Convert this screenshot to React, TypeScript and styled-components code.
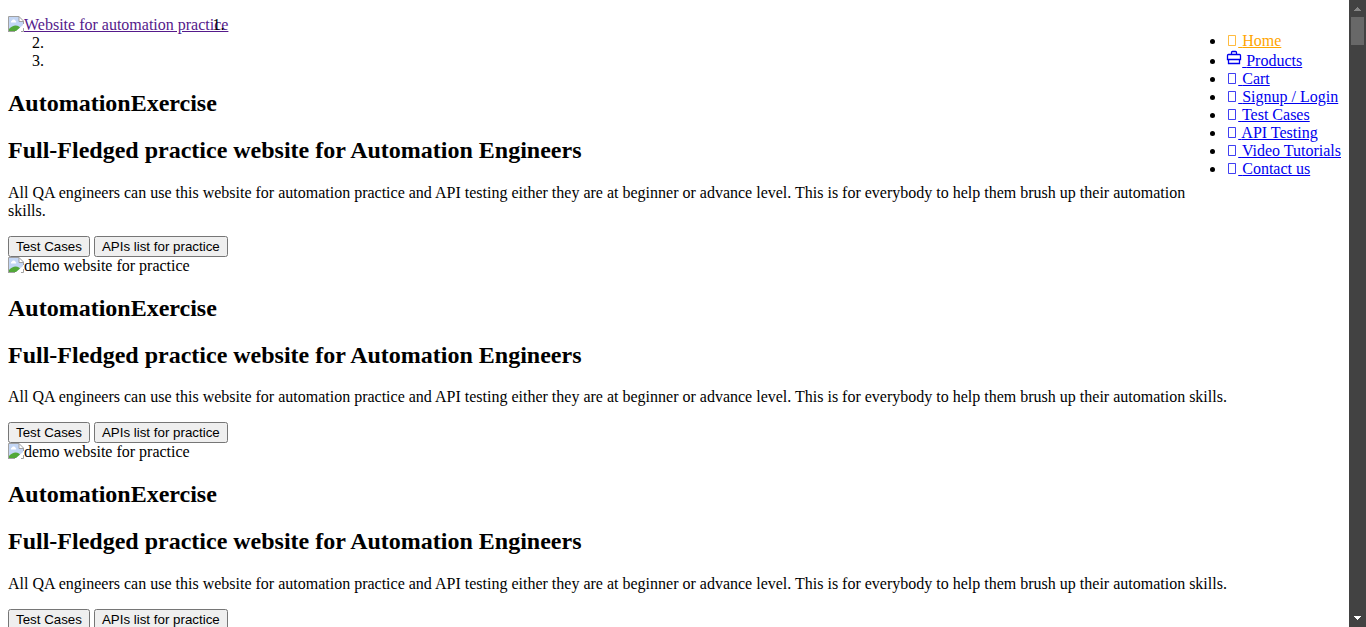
import React from "react";
import styled, { createGlobalStyle } from "styled-components";

const GlobalStyle = createGlobalStyle`
  body {
    margin: 0;
    background: #fff;
    color: #000;
    font-family: "Liberation Serif", "Times New Roman", serif;
    font-size: 16px;
    line-height: normal;
  }
`;

const Shell = styled.div`
  display: flex;
  height: 100vh;
  overflow: hidden;
`;

const Page = styled.main`
  flex: 1;
  min-width: 0;
  padding: 16px 8px 0;
  overflow: hidden;
`;

const LogoLink = styled.a`
  float: left;
  color: #551a8b;
  line-height: 18px;
`;

const BrokenIcon = styled.svg`
  width: 16px;
  height: 16px;
  vertical-align: top;
`;

const Menu = styled.ul`
  float: right;
  margin: 16px 0;
  padding-left: 40px;
`;

const MenuLink = styled.a<{ $active?: boolean }>`
  color: ${(p) => (p.$active ? "orange" : "#0000ee")};
`;

const Glyph = styled.svg`
  vertical-align: baseline;
`;

const Indicators = styled.ol`
  margin: 0;
  padding-left: 40px;
`;

/* Headings keep the browser's own h2 size and margins. */
const Title = styled.h2`
  font-weight: bold;
`;

const Blurb = styled.p`
  margin: 16px 0;
`;

const ActionButton = styled.button`
  font-family: "Liberation Sans", Arial, sans-serif;
`;

const Picture = styled.div`
  line-height: 18px;
`;

const ScrollTrack = styled.div`
  display: flex;
  flex: none;
  flex-direction: column;
  align-items: center;
  width: 17px;
  background: #424242;
`;

const ScrollThumb = styled.div`
  width: 13px;
  height: 28px;
  margin-bottom: auto;
  background: #686868;
`;

const MissingImage = () => (
  <BrokenIcon viewBox="0 0 16 16" aria-hidden="true">
    <path d="M1 1H11L15 5V9L8 15H1Z" fill="#c3d6f5" />
    <path d="M3 6.500Q2.500 5 4 4.500Q4.500 3 6 3.500Q7.500 3.500 7.500 5Q9 5.500 8 6.500Z" fill="#fff" />
    <path d="M1 15V13C4 9.500 8 8.500 11 10.500L12 11.500L8 15Z" fill="#52a838" />
    <path d="M11 1V5H15Z" fill="#fff" />
    <path d="M.5 16V.5H11L15.500 5V8M11 .5V5.500H15.500M0 15.500H7M15.500 12V15.500H13" fill="none" stroke="#a0a0a0" />
    <path d="M8 16L16 9V11.500L11.500 16Z" fill="#fff" />
  </BrokenIcon>
);

const EmptyGlyph = () => (
  <Glyph width="12" height="11" viewBox="0 0 12 11" aria-hidden="true">
    <path d="M2.500 .5H9.500V10.500H2.500Z" fill="none" stroke="currentColor" strokeOpacity=".75" />
  </Glyph>
);

const CaseGlyph = () => (
  <Glyph width="16" height="16" viewBox="0 0 16 16" aria-hidden="true">
    <path
      d="M5.500 4.500V2.500Q5.500 1.500 6.500 1.500H9.500Q10.500 1.500 10.500 2.500V4.500M2.500 4.500H13.500Q14.500 4.500 14.500 5.500V9.500H1.500V5.500Q1.500 4.500 2.500 4.500ZM2.500 9.500V13.500H13.500V9.500"
      fill="none"
      stroke="currentColor"
      strokeWidth="1.300"
    />
  </Glyph>
);

const menuItems = [
  "Home",
  "Products",
  "Cart",
  "Signup / Login",
  "Test Cases",
  "API Testing",
  "Video Tutorials",
  "Contact us",
];

const slides = [1, 2, 3];

export default function App() {
  return (
    <>
      <GlobalStyle />
      <Shell>
        <Page>
          <LogoLink href="#home">
            <MissingImage />
            Website for automation practice
          </LogoLink>
          <Menu>
            {menuItems.map((item) => (
              <li key={item}>
                <MenuLink href="#menu" $active={item === "Home"}>
                  {item === "Products" ? <CaseGlyph /> : <EmptyGlyph />} {item}
                </MenuLink>
              </li>
            ))}
          </Menu>
          <Indicators>
            {slides.map((n) => (
              <li key={n} />
            ))}
          </Indicators>
          {slides.map((n) => (
            <section key={n}>
              <Title>AutomationExercise</Title>
              <Title>Full-Fledged practice website for Automation Engineers</Title>
              <Blurb>
                All QA engineers can use this website for automation practice and API testing either
                they are at beginner or advance level. This is for everybody to help them brush up
                their automation skills.
              </Blurb>
              <ActionButton type="button">Test Cases</ActionButton>{" "}
              <ActionButton type="button">APIs list for practice</ActionButton>
              {n < slides.length && (
                <Picture>
                  <MissingImage />
                  demo website for practice
                </Picture>
              )}
            </section>
          ))}
        </Page>
        <ScrollTrack aria-hidden="true">
          <svg width="17" height="17" viewBox="0 0 17 17" shapeRendering="crispEdges">
            <path d="M8 7h1v1h1v1h1v1h1v1H5v-1h1V9h1V8h1z" fill="#868686" />
          </svg>
          <ScrollThumb />
          <svg width="17" height="17" viewBox="0 0 17 17" shapeRendering="crispEdges">
            <path d="M5 6h7v1h-1v1h-1v1H9v1H8V9H7V8H6V7H5z" fill="#fff" />
          </svg>
        </ScrollTrack>
      </Shell>
    </>
  );
}
